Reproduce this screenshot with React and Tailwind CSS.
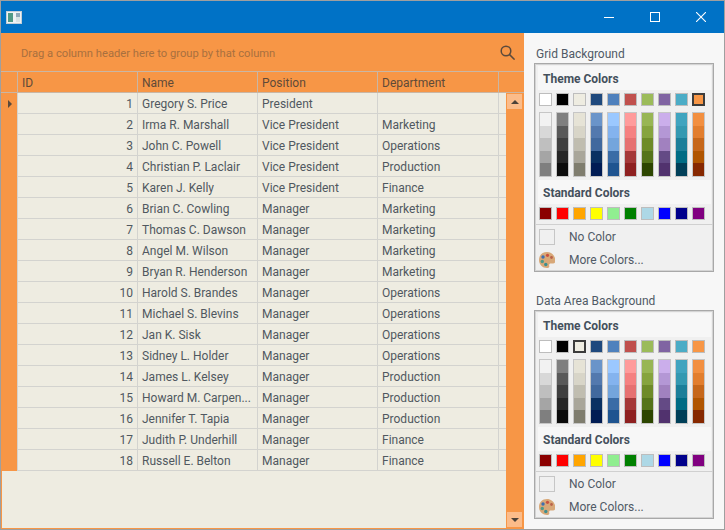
import React from "react";

const people = [
  [1, "Gregory S. Price", "President", ""],
  [2, "Irma R. Marshall", "Vice President", "Marketing"],
  [3, "John C. Powell", "Vice President", "Operations"],
  [4, "Christian P. Laclair", "Vice President", "Production"],
  [5, "Karen J. Kelly", "Vice President", "Finance"],
  [6, "Brian C. Cowling", "Manager", "Marketing"],
  [7, "Thomas C. Dawson", "Manager", "Marketing"],
  [8, "Angel M. Wilson", "Manager", "Marketing"],
  [9, "Bryan R. Henderson", "Manager", "Marketing"],
  [10, "Harold S. Brandes", "Manager", "Operations"],
  [11, "Michael S. Blevins", "Manager", "Operations"],
  [12, "Jan K. Sisk", "Manager", "Operations"],
  [13, "Sidney L. Holder", "Manager", "Operations"],
  [14, "James L. Kelsey", "Manager", "Production"],
  [15, "Howard M. Carpen...", "Manager", "Production"],
  [16, "Jennifer T. Tapia", "Manager", "Production"],
  [17, "Judith P. Underhill", "Manager", "Finance"],
  [18, "Russell E. Belton", "Manager", "Finance"],
];

const theme = ["#ffffff", "#000000", "#eeece1", "#1f497d", "#4f81bd", "#c0504d", "#9bbb59", "#8064a2", "#4bacc6", "#f79646"];
const shades = [
  ["#f2f2f2", "#d8d8d8", "#bfbfbf", "#a5a5a5", "#7f7f7f"],
  ["#7f7f7f", "#595959", "#3f3f3f", "#262626", "#0c0c0c"],
  ["#e6e3d6", "#d8d5c8", "#c0bdb0", "#a9a69a", "#7f7d6e"],
  ["#6a94c9", "#5379ae", "#41699e", "#0a3162", "#011c54"],
  ["#9bc8ff", "#84b3ee", "#74a5dc", "#3a6ca6", "#1f5490"],
  ["#ff9b9b", "#f58181", "#e67171", "#a53838", "#8e2020"],
  ["#98b654", "#86a43e", "#6e8b28", "#55741a", "#2c4500"],
  ["#cbaeeb", "#b497d5", "#a181bf", "#644a85", "#51326e"],
  ["#40a4bf", "#3499b1", "#1c7f99", "#006c84", "#003f58"],
  ["#f28f40", "#e27e2e", "#c6671a", "#b05500", "#862800"],
];
const standard = ["#8b0000", "#ff0000", "#ffa500", "#ffff00", "#90ee90", "#008000", "#add8e6", "#0000ff", "#00008b", "#800080"];

function Swatch({ color, selected }) {
  return (
    <div
      className={selected ? "w-[13px] h-[13px] border-2 border-[#3c3c3c]" : "w-[13px] h-[13px] border border-[#bdbdbd]"}
      style={{ backgroundColor: color }}
    />
  );
}

function Palette() {
  return (
    <svg width="16" height="16" viewBox="1 1 16 16">
      <path d="M9 1C4.200 1 1 4.400 1 9c0 4.600 3.600 8 8 8 2 0 2.600-1 2.200-2.200-.4-1.200.2-2.300 1.600-2.300h2.200c1.500 0 2.500-1 2.500-3C17 4.500 13.500 1 9 1z" fill="#d8a878" />
      <circle cx="5" cy="6" r="1.700" fill="#3d6fb0" />
      <circle cx="9.500" cy="4.300" r="1.600" fill="#c8503f" />
      <circle cx="13.500" cy="6.500" r="1.400" fill="#b9624a" />
      <circle cx="4.300" cy="10.500" r="1.700" fill="#4f9a8a" />
      <circle cx="7.800" cy="13.500" r="1.700" fill="#3f8f90" />
    </svg>
  );
}

function ColorPanel({ selected }) {
  return (
    <div className="w-[180px] h-[209px] border border-[#a8a8a8] shadow-[inset_0_0_0_1px_#d4d4d4] bg-[#f0f0f0] pt-[2px] flex flex-col">
      <div className="h-[24px] ml-[3px] mr-[2px] bg-[#f7f7f7] pl-[5px] pt-[2px] flex items-center font-bold text-[12px] text-[#44505c]">Theme Colors</div>
      <div className="flex gap-[4px] pl-[4px] mt-[3px]">
        {theme.map((c, i) => (
          <Swatch key={i} color={c} selected={i === selected} />
        ))}
      </div>
      <div className="flex gap-[4px] pl-[4px] mt-[6px]">
        {shades.map((col, i) => (
          <div key={i} className="w-[13px] h-[65px] border border-[#c6c6c6] flex flex-col">
            {col.map((c) => (
              <div key={c} className="flex-1" style={{ backgroundColor: c }} />
            ))}
          </div>
        ))}
      </div>
      <div className="h-[24px] mt-[3px] ml-[3px] mr-[2px] bg-[#f7f7f7] pl-[5px] pt-[2px] flex items-center font-bold text-[12px] text-[#44505c]">Standard Colors</div>
      <div className="flex gap-[4px] pl-[4px] mt-[3px]">
        {standard.map((c) => (
          <Swatch key={c} color={c} />
        ))}
      </div>
      <div className="h-[1px] bg-[#d0d0d0] mt-[4px] ml-[1px]" />
      <div className="flex items-center h-[23px] pl-[4px]">
        <div className="w-[16px] h-[16px] border border-[#c6c6c6]" />
        <span className="ml-[14px] text-[12px] text-[#505a66]">No Color</span>
      </div>
      <div className="flex items-center h-[23px] pl-[4px]">
        <Palette />
        <span className="ml-[14px] text-[12px] text-[#505a66]">More Colors...</span>
      </div>
    </div>
  );
}

const cell = "h-full border-r border-[#d3d3cf] px-[4px] pt-[1px] flex items-center truncate";

export default function App() {
  return (
    <div className="w-[725px] h-[530px] border border-[#9f9f9f] flex flex-col overflow-hidden text-[12px]" style={{ fontFamily: 'Roboto, "Open Sans", sans-serif' }}>
      <div className="h-[32px] shrink-0 bg-[#0072c6] flex items-center text-white">
        <svg width="16" height="13" viewBox="0 0 16 13" className="ml-[5px]">
          <rect x="0.500" y="0.500" width="15" height="12" fill="#eef2f4" stroke="#c3ced6" />
          <rect x="2" y="2" width="5" height="9" fill="#4f9a86" />
          <rect x="10" y="2" width="4" height="4" fill="#8fa9b8" />
          <rect x="10" y="6" width="4" height="5" fill="#d8e4e4" />
        </svg>
        <div className="flex-1" />
        <svg width="10" height="10" viewBox="0 0 10 10" className="mr-[36px]"><path d="M0 5.500h10" stroke="#fff" /></svg>
        <svg width="10" height="10" viewBox="0 0 10 10" className="mr-[36px]"><rect x="0.500" y="0.500" width="9" height="9" fill="none" stroke="#fff" /></svg>
        <svg width="10" height="10" viewBox="0 0 10 10" className="mr-[18px]"><path d="M0 0l10 10M10 0L0 10" stroke="#fff" strokeWidth="1.100" /></svg>
      </div>
      <div className="flex flex-1 min-h-0">
        <div className="w-[523px] bg-[#f79646] flex flex-col">
          <div className="h-[38px] shrink-0 flex items-center pl-[20px] pr-[9px] pt-[1px] text-[#a8703f]">
            <span className="flex-1 pt-[3px] text-[11.2px]">Drag a column header here to group by that column</span>
            <svg width="15" height="15" viewBox="0 0 15 15" fill="none" stroke="#5b4a3c" strokeWidth="1.500"><circle cx="6" cy="6" r="4.800" /><path d="M9.600 9.600l5 5" /></svg>
          </div>
          <div className="h-[22px] shrink-0 flex border-t border-b border-[#c9b6a4] text-[#5f4a38]">
            <div className="w-[17px] border-r border-[#c9b6a4]" />
            <div className="w-[120px] border-r border-[#c9b6a4] pl-[4px] pt-[1px] flex items-center">ID</div>
            <div className="w-[120px] border-r border-[#c9b6a4] pl-[4px] pt-[1px] flex items-center">Name</div>
            <div className="w-[120px] border-r border-[#c9b6a4] pl-[4px] pt-[1px] flex items-center">Position</div>
            <div className="w-[121px] border-r border-[#c9b6a4] pl-[4px] pt-[1px] flex items-center">Department</div>
          </div>
          <div className="flex flex-1 min-h-0">
            <div className="flex-1 bg-[#eeece1] ml-[1px] mb-[1px] flex flex-col text-[#505860]">
              {people.map((p) => (
                <div key={p[0]} className="h-[21px] shrink-0 flex">
                  <div className="w-[16px] bg-[#f79646] border-r border-[#d3d3cf] flex items-center justify-center">
                    {p[0] === 1 && <div className="w-0 h-0 border-y-[4px] border-y-transparent border-l-[4px] border-l-[#5b4a3c]" />}
                  </div>
                  <div className="flex flex-1 border-b border-[#d3d3cf]">
                    <div className={cell + " w-[120px] justify-end"}>{p[0]}</div>
                    <div className={cell + " w-[120px]"}>{p[1]}</div>
                    <div className={cell + " w-[120px]"}>{p[2]}</div>
                    <div className={cell + " w-[121px]"}>{p[3]}</div>
                  </div>
                </div>
              ))}
            </div>
            <div className="w-[18px] flex flex-col justify-between items-start pl-[1px] pt-[1px] pb-[2px]">
              <div className="w-[15px] h-[15px] bg-[#fbbc8a] flex items-center justify-center">
                <div className="w-0 h-0 border-x-[4px] border-x-transparent border-b-[4px] border-b-[#4c4238]" />
              </div>
              <div className="w-[15px] h-[15px] bg-[#fbbc8a] flex items-center justify-center">
                <div className="w-0 h-0 border-x-[4px] border-x-transparent border-t-[4px] border-t-[#4c4238]" />
              </div>
            </div>
          </div>
        </div>
        <div className="flex-1 bg-[#f7f7f7] pl-[10px] flex flex-col text-[#505a66]">
          <div className="h-[30px] flex items-end pl-[2px]">Grid Background</div>
          <ColorPanel selected={9} />
          <div className="h-[38px] flex items-end pl-[2px]">Data Area Background</div>
          <ColorPanel selected={2} />
        </div>
      </div>
    </div>
  );
}
